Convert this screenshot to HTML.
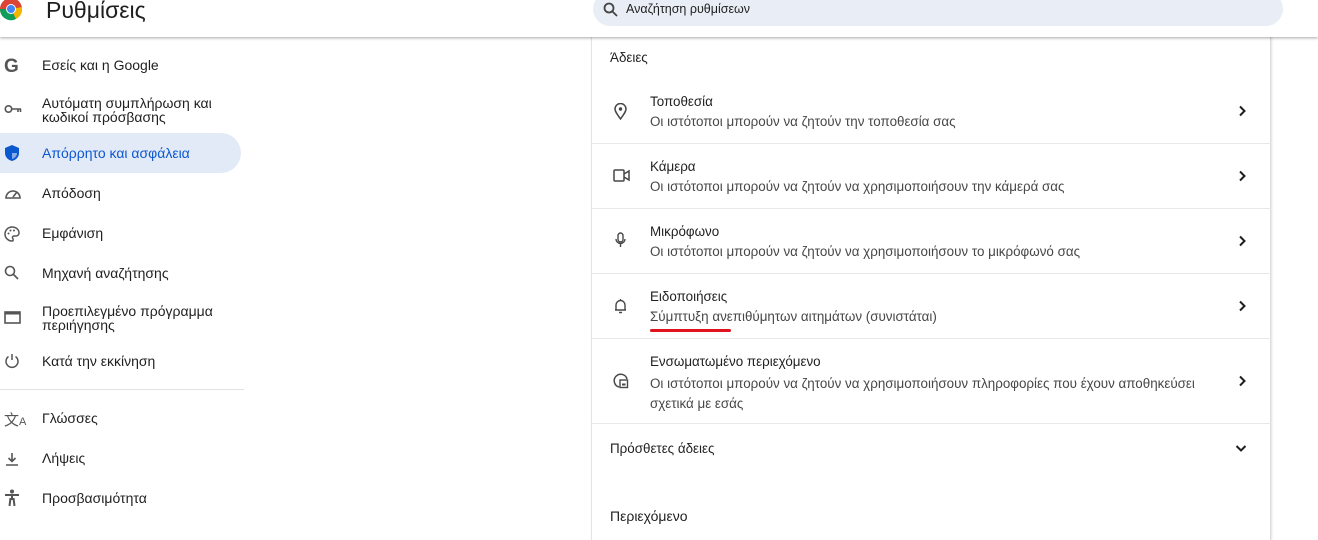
<!DOCTYPE html>
<html><head><meta charset="utf-8"><style>
*{margin:0;padding:0;box-sizing:border-box}
body{width:1318px;height:516px;overflow:hidden;background:#fff;font-family:"Liberation Sans","DejaVu Sans",sans-serif;color:#1f1f1f;position:relative}
.hdr{position:absolute;left:0;top:0;width:1318px;height:37px;background:#fff;box-shadow:0 1px 3px rgba(0,0,0,.35);z-index:5}
.title{position:absolute;left:46px;top:-3px;font-size:23px;color:#1f1f1f}
.search{position:absolute;left:593px;top:-8px;width:690px;height:34px;border-radius:17px;background:#e9eef6}
.search span{position:absolute;left:33px;top:10px;font-size:12.5px;color:#1f1f1f}
.nav{position:absolute;left:42px;font-size:14px;line-height:14px;color:#1f1f1f}
.ic{position:absolute;left:4px}
.card{position:absolute;left:591px;top:20px;width:680px;height:520px;background:#fff;border-left:1px solid #e3e3e3;border-right:1px solid #ddd;box-shadow:1px 0 2px rgba(0,0,0,.12)}
.t{position:absolute;font-size:13.4px;color:#1f1f1f}
.s{position:absolute;font-size:13.4px;color:#474747}
.sep{position:absolute;left:591px;width:680px;height:1px;background:#e8e8e8}
.chev{position:absolute;left:1237px}
</style></head><body>
<div class="card"></div>
<div class="hdr">
<svg style="position:absolute;left:0;top:-4px" width="22" height="26" viewBox="0 0 22 26"><circle cx="11" cy="13" r="11" fill="#db4437"/><path d="M11 13 L0 13 A11 11 0 0 0 16 23 Z" fill="#0f9d58"/><path d="M11 13 L16 23 A11 11 0 0 0 22 11 Z" fill="#f4b400"/><circle cx="11" cy="13" r="5" fill="#fff"/><circle cx="11" cy="13" r="4" fill="#4285f4"/></svg>
<div class="title">Ρυθμίσεις</div>
<div class="search"><svg style="position:absolute;left:10px;top:10px" width="15" height="15" viewBox="0 0 15 15"><circle cx="6" cy="6" r="4.5" fill="none" stroke="#444" stroke-width="1.8"/><path d="M9.5 9.5 L14 14" stroke="#444" stroke-width="1.8"/></svg><span>Αναζήτηση ρυθμίσεων</span></div>
</div>

<div style="position:absolute;left:0;top:133px;width:241px;height:40px;background:#e3eaf7;border-radius:0 20px 20px 0"></div>
<div class="nav" style="top:58px;font-weight:500">Εσείς και η Google</div>
<div class="nav" style="top:96px">Αυτόματη συμπλήρωση και<br>κωδικοί πρόσβασης</div>
<div class="nav" style="top:146px;color:#0b57d0">Απόρρητο και ασφάλεια</div>
<div class="nav" style="top:186px">Απόδοση</div>
<div class="nav" style="top:226px">Εμφάνιση</div>
<div class="nav" style="top:266px">Μηχανή αναζήτησης</div>
<div class="nav" style="top:304px">Προεπιλεγμένο πρόγραμμα<br>περιήγησης</div>
<div class="nav" style="top:354px">Κατά την εκκίνηση</div>
<div style="position:absolute;left:0;top:389px;width:244px;height:1px;background:#e3e3e3"></div>
<div class="nav" style="top:411px">Γλώσσες</div>
<div class="nav" style="top:451px">Λήψεις</div>
<div class="nav" style="top:491px">Προσβασιμότητα</div>

<div class="ic" style="top:56px;font-size:19px;font-weight:bold;color:#555">G</div>
<svg class="ic" style="top:103px" width="18" height="12" viewBox="0 0 18 12"><circle cx="4.5" cy="6" r="3.2" fill="none" stroke="#555" stroke-width="1.6"/><path d="M8 6 H17 M14 6 V9 M16.5 6 V9" stroke="#555" stroke-width="1.6" fill="none"/></svg>
<svg class="ic" style="top:144px" width="16" height="18" viewBox="0 0 16 18"><path d="M8 1 L15 4 V9 C15 13 12 16 8 17 C4 16 1 13 1 9 V4 Z" fill="#0b57d0"/><path d="M8 3 V15 C11 14 13 12 13 9 H8" fill="#fff" opacity=".5"/></svg>
<svg class="ic" style="top:186px" width="18" height="14" viewBox="0 0 18 14"><path d="M2 12 A7 7 0 1 1 16 12 Z" fill="none" stroke="#555" stroke-width="1.6"/><path d="M9 11 L13 6" stroke="#555" stroke-width="1.6"/></svg>
<svg class="ic" style="top:226px" width="16" height="16" viewBox="0 0 16 16"><path d="M8 1 A7 7 0 0 0 8 15 C9.5 15 9.5 13 8.5 12 C8 11 9 10 10 10 H12 A3 3 0 0 0 15 7 C15 3.5 12 1 8 1 Z" fill="none" stroke="#555" stroke-width="1.5"/><circle cx="4.5" cy="7.5" r="1" fill="#555"/><circle cx="6.5" cy="4.5" r="1" fill="#555"/><circle cx="10" cy="4.5" r="1" fill="#555"/></svg>
<svg class="ic" style="top:265px" width="16" height="16" viewBox="0 0 16 16"><circle cx="6" cy="6" r="4.5" fill="none" stroke="#555" stroke-width="1.6"/><path d="M9.5 9.5 L14 14" stroke="#555" stroke-width="1.6"/></svg>
<svg class="ic" style="top:311px" width="17" height="13" viewBox="0 0 17 13"><rect x="1" y="1" width="15" height="11" fill="none" stroke="#555" stroke-width="1.6"/><rect x="1" y="1" width="15" height="2.5" fill="#555"/></svg>
<svg class="ic" style="top:353px" width="16" height="16" viewBox="0 0 16 16"><path d="M8 1 V7 M4.5 3.5 A6 6 0 1 0 11.5 3.5" fill="none" stroke="#555" stroke-width="1.5"/></svg>
<div class="ic" style="top:409px;font-size:15px;color:#555">文<span style="font-size:11px">A</span></div>
<svg class="ic" style="top:451px" width="16" height="16" viewBox="0 0 16 16"><path d="M8 2 V10 M4.5 7 L8 10.5 L11.5 7 M2 14 H14" fill="none" stroke="#555" stroke-width="1.6"/></svg>
<svg class="ic" style="top:489px" width="16" height="18" viewBox="0 0 16 18"><circle cx="8" cy="2.5" r="2" fill="#555"/><path d="M1 6 H15 M8 6 V11 M5.5 17 L6.5 9 M10.5 17 L9.5 9" stroke="#555" stroke-width="2" fill="none"/></svg>

<div class="t" style="left:610px;top:50px">Άδειες</div>

<div class="t" style="left:650px;top:94px">Τοποθεσία</div>
<div class="s" style="left:650px;top:114px">Οι ιστότοποι μπορούν να ζητούν την τοποθεσία σας</div>
<div class="sep" style="top:143px"></div>
<div class="t" style="left:650px;top:159px">Κάμερα</div>
<div class="s" style="left:650px;top:179px">Οι ιστότοποι μπορούν να ζητούν να χρησιμοποιήσουν την κάμερά σας</div>
<div class="sep" style="top:208px"></div>
<div class="t" style="left:650px;top:224px">Μικρόφωνο</div>
<div class="s" style="left:650px;top:244px">Οι ιστότοποι μπορούν να ζητούν να χρησιμοποιήσουν το μικρόφωνό σας</div>
<div class="sep" style="top:273px"></div>
<div class="t" style="left:650px;top:289px">Ειδοποιήσεις</div>
<div class="s" style="left:650px;top:309px">Σύμπτυξη ανεπιθύμητων αιτημάτων (συνιστάται)</div>
<div style="position:absolute;left:650px;top:329px;width:81px;height:3px;border-radius:2px;background:#e0121d"></div>
<div class="sep" style="top:338px"></div>
<div class="t" style="left:650px;top:354px">Ενσωματωμένο περιεχόμενο</div>
<div class="s" style="left:650px;top:374px;line-height:20px">Οι ιστότοποι μπορούν να ζητούν να χρησιμοποιήσουν πληροφορίες που έχουν αποθηκεύσει<br>σχετικά με εσάς</div>
<div class="sep" style="top:423px"></div>
<div class="t" style="left:610px;top:441px">Πρόσθετες άδειες</div>
<div class="t" style="left:610px;top:508px;font-size:14px;color:#1f1f1f">Περιεχόμενο</div>

<svg style="position:absolute;left:614px;top:103px" width="13" height="17" viewBox="0 0 13 17"><path d="M6.5 16 C3 11 1 8.5 1 6 A5.5 5.5 0 0 1 12 6 C12 8.5 10 11 6.5 16 Z" fill="none" stroke="#474747" stroke-width="1.5"/><circle cx="6.5" cy="6" r="1.7" fill="#474747"/></svg>
<svg style="position:absolute;left:613px;top:169px" width="17" height="13" viewBox="0 0 17 13"><rect x="1" y="1" width="10" height="11" rx="1" fill="none" stroke="#474747" stroke-width="1.5"/><path d="M11 5 L16 2 V11 L11 8" fill="none" stroke="#474747" stroke-width="1.5"/></svg>
<svg style="position:absolute;left:615px;top:232px" width="11" height="17" viewBox="0 0 11 17"><rect x="3" y="1" width="5" height="9" rx="2.5" fill="none" stroke="#474747" stroke-width="1.4"/><path d="M1 7 A4.5 4.5 0 0 0 10 7 M5.5 11.5 V15" fill="none" stroke="#474747" stroke-width="1.4"/></svg>
<svg style="position:absolute;left:614px;top:298px" width="13" height="16" viewBox="0 0 13 16"><path d="M2 12 V7 A4.5 4.5 0 0 1 11 7 V12 Z M1 12 H12 M5 14.5 H8 M6.5 1 V2.5" fill="none" stroke="#474747" stroke-width="1.4"/></svg>
<svg style="position:absolute;left:613px;top:373px" width="16" height="16" viewBox="0 0 16 16"><path d="M6 14 A6.5 6.5 0 1 1 14 6" fill="none" stroke="#474747" stroke-width="1.5"/><rect x="7" y="7" width="7.5" height="7.5" fill="none" stroke="#474747" stroke-width="1.4"/><rect x="9" y="10.5" width="3.5" height="2" fill="#474747"/></svg>

<svg class="chev" style="top:105px" width="10" height="12" viewBox="0 0 10 12"><path d="M3 1.5 L7.5 6 L3 10.5" fill="none" stroke="#1f1f1f" stroke-width="2"/></svg>
<svg class="chev" style="top:170px" width="10" height="12" viewBox="0 0 10 12"><path d="M3 1.5 L7.5 6 L3 10.5" fill="none" stroke="#1f1f1f" stroke-width="2"/></svg>
<svg class="chev" style="top:235px" width="10" height="12" viewBox="0 0 10 12"><path d="M3 1.5 L7.5 6 L3 10.5" fill="none" stroke="#1f1f1f" stroke-width="2"/></svg>
<svg class="chev" style="top:300px" width="10" height="12" viewBox="0 0 10 12"><path d="M3 1.5 L7.5 6 L3 10.5" fill="none" stroke="#1f1f1f" stroke-width="2"/></svg>
<svg class="chev" style="top:375px" width="10" height="12" viewBox="0 0 10 12"><path d="M3 1.5 L7.5 6 L3 10.5" fill="none" stroke="#1f1f1f" stroke-width="2"/></svg>
<svg style="position:absolute;left:1235px;top:443px" width="12" height="10" viewBox="0 0 12 10"><path d="M1.5 3 L6 7.5 L10.5 3" fill="none" stroke="#1f1f1f" stroke-width="2"/></svg>
</body></html>
